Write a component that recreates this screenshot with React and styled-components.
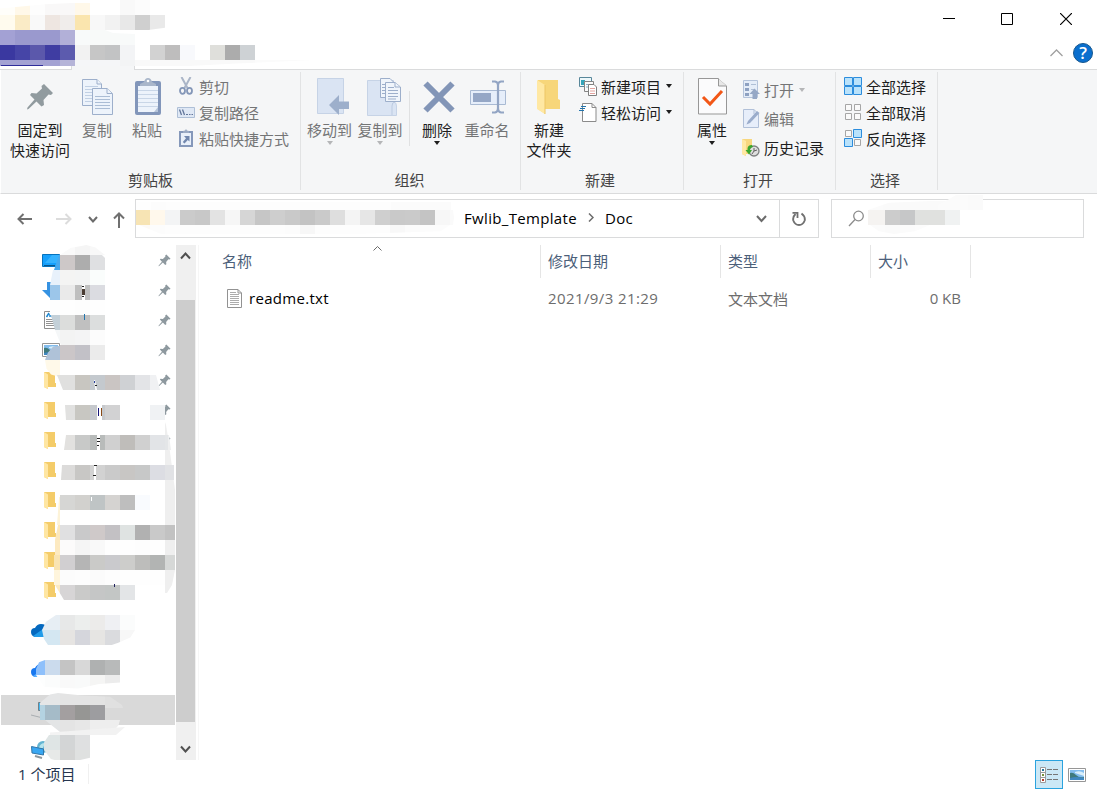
import React from 'react';
import styled, { createGlobalStyle } from 'styled-components';

const lineColor = '#dadbdc';
const ribbonColor = '#f5f6f7';
const disabledColor = '#747576';

const GlobalStyle = createGlobalStyle`
    * {
        box-sizing: border-box;
    }
    body {
        margin: 0;
        background: white;
        font-family: "Open Sans", "Noto Sans CJK SC", sans-serif;
        font-size: 15px;
        color: #1e1e1e;
    }
    svg {
        display: block;
        flex: none;
    }
`;

// Icons
const pinPath = 'M18 1 27 10 25 12 22.500 11.500 17.500 17 18 22 15.500 23.500 10.500 18.500 2.500 26 1 26.500 1.500 24.500 8.500 16.500 4 12 5.500 10 10.500 10.500 16 5.500 15.500 3Z';

const Pin = ({ size, color }) => (
    <svg width={size} height={size} viewBox="0 0 28 28">
        <path d={pinPath} fill={color} />
    </svg>
);

const CopyIcon = () => (
    <svg width="31" height="36" viewBox="0 0 31 36">
        <g fill="#edf3fb" stroke="#9dafcb">
            <path d="M.5.500H15L19.500 5V26.500H.500Z" />
            <path d="M15 .5V5H19.500" />
            <path d="M3 7.500H16M3 10.500H16M3 13.500H16M3 16.500H10M3 19.500H10M3 22.500H10" stroke="#c1d0e4" />
            <path d="M10.500 9.500H25L30.500 14.500V35.500H10.500Z" />
            <path d="M25 9.500V14.500H30" />
            <path d="M13 17.500H28M13 20.500H28M13 23.500H28M13 26.500H28M13 29.500H28" stroke="#abbdd5" />
        </g>
    </svg>
);

const PasteIcon = () => (
    <svg width="26" height="37" viewBox="0 0 26 37">
        <rect y="3" width="26" height="34" rx="2" fill="#8296ba" />
        <path d="M3 8H23V34H3Z" fill="#edf3fb" />
        <path d="M3 12.500H23M3 16.500H23M3 20.500H23M3 24.500H23M3 28.500H23" stroke="#c9d6e7" />
        <path d="M19 34 23 29V34Z" fill="#b5c4da" />
        <path d="M5 8V6L9 4Q10 0 13 0T17 4L21 6V8Z" fill="#a9b6ca" />
        <circle cx="13" cy="3" r="1.300" fill="white" />
    </svg>
);

const CutIcon = () => (
    <svg width="14" height="18" viewBox="0 0 14 18">
        <path d="M2.500 0 8.500 11M11.500 0 5.500 11" stroke="#aab5c7" strokeWidth="2" />
        <ellipse cx="3.500" cy="13.800" rx="2.500" ry="3" fill="none" stroke="#8497b8" strokeWidth="1.800" />
        <ellipse cx="10.500" cy="13.800" rx="2.500" ry="3" fill="none" stroke="#8497b8" strokeWidth="1.800" />
    </svg>
);

const PathIcon = () => (
    <svg width="18" height="11" viewBox="0 0 18 11">
        <path d="M.5.500H17.500V10.500H.500Z" fill="#dfe8f5" stroke="#aebfd6" />
        <path d="M2.500 2.500 4.500 8M5.500 2.500 7.500 8" stroke="#63779b" strokeWidth="1.300" />
        <path d="M9 7.500H11M12 7.500H13.500M14.500 7.500H16" stroke="#63779b" />
    </svg>
);

const ShortcutIcon = () => (
    <svg width="14" height="18" viewBox="0 0 14 18">
        <path d="M1 3H13V17H1Z" fill="#e9f0fa" stroke="#8598ba" strokeWidth="2" />
        <path d="M4 4V2L6 1.500 7 0 8 1.500 10 2V4Z" fill="#9baac4" />
        <path d="M5 7H10.500V12.500L8.800 11 5.500 14.500 3.800 13 7 9.300Z" fill="#7187ae" />
    </svg>
);

const MoveIcon = () => (
    <svg width="33" height="37" viewBox="0 0 33 37">
        <path d="M.5.500H26.500V35.500H.500Z" fill="#dae4f3" stroke="#c6d3e6" />
        <path d="M12 27 22 17V23.500H32V31H22V37Z" fill="#9dafcb" />
    </svg>
);

const CopyToIcon = () => (
    <svg width="34" height="38" viewBox="0 0 34 38">
        <path d="M.5 2.500H26.500V24Q29.500 24 29.500 28V37.500H.500Z" fill="#dae4f3" stroke="#c6d3e6" />
        <path d="M25 37V28Q25 24 28 24" fill="none" stroke="#bccbe1" />
        <g fill="#f0f5fb" stroke="#9dafcb">
            <path d="M13.500.500H23L27.500 5V19.500H13.500Z" />
            <path d="M15 6.500H19M15 9.500H19M15 12.500H19M15 15.500H19" />
            <path d="M18.500 4.500H28L33.500 9V23.500H18.500Z" />
            <path d="M28 4.500V9H33M21 9.500H27M21 12.500H31M21 15.500H31M21 18.500H31M21 21H29" />
        </g>
    </svg>
);

const DeleteIcon = () => (
    <svg width="32" height="32" viewBox="0 0 32 32">
        <path d="M2.500 2.500 29.500 29.500M29.500 2.500 2.500 29.500" stroke="#8295b7" strokeWidth="6" />
    </svg>
);

const RenameIcon = () => (
    <svg width="37" height="34" viewBox="0 0 37 34">
        <path d="M.500 10.500H35.500V24.500H.500Z" fill="#e6eefa" stroke="#a9bad3" />
        <path d="M3 13H21V22H3Z" fill="#95a7c6" />
        <path d="M28 4V30M22 1.500H25Q28 2 28 5Q28 2 31 1.500H34M22 32.500H25Q28 32 28 28Q28 32 31 32.500H34" fill="none" stroke="#93a5c4" strokeWidth="2.200" />
    </svg>
);

const NewFolderIcon = () => (
    <svg width="24" height="36" viewBox="0 0 24 36">
        <path d="M1 1H21V20L23 21V30H8V35L1 30Z" fill="#f7d67a" />
        <path d="M0 1 8 6V35L0 30Z" fill="#ffe8a3" />
        <path d="M8 6V35" stroke="#edc665" />
    </svg>
);

const NewItemIcon = () => (
    <svg width="19" height="19" viewBox="0 0 19 19">
        <path d="M.5.500H12.500V9.500H.500Z" fill="#edf8fb" stroke="#58879a" />
        <path d="M2 3H6V8H2Z" fill="#34a5ba" />
        <path d="M5.500 4.500H14.500V14.500H5.500Z" fill="#fafafa" stroke="#858585" />
        <path d="M7 7.500H12M7 10H12" stroke="#86b2cb" />
        <path d="M9.500 7.500H15L17.500 10V18.500H9.500Z" fill="#fff" stroke="#808080" />
        <path d="M11 11.500H16M11 14H16M11 16.500H16" stroke="#e3a4a0" />
    </svg>
);

const EasyAccessIcon = () => (
    <svg width="18" height="19" viewBox="0 0 18 19">
        <path d="M3.500.500H13L17 4.500V18.500H3.500Z" fill="#fff" stroke="#8b8b8b" />
        <path d="M13 .5V4.500H17" fill="none" stroke="#8b8b8b" />
        <path d="M2 3.500H7M1 5.500H6M0 7.500H5" stroke="#2375ad" />
    </svg>
);

const PropertiesIcon = () => (
    <svg width="29" height="37" viewBox="0 0 29 37">
        <path d="M.5.500H20L28.500 8V36H.500Z" fill="#fbfbfc" stroke="#979797" />
        <path d="M20.500.500V8H28.500" fill="#e7e7e7" stroke="#979797" />
        <path d="M5 19 12 26 24 13" fill="none" stroke="#f25717" strokeWidth="3" />
    </svg>
);

const OpenIcon = () => (
    <svg width="17" height="19" viewBox="0 0 17 19">
        <path d="M.5.500H14.500V17.500H.500Z" fill="#e5edf8" stroke="#b4c3da" />
        <path d="M2 3H6V6H2ZM2 8H6V11H2ZM2 13H6V16H2Z" fill="#8ea1c1" />
        <path d="M8 4.500H13M8 9.500H12" stroke="#afbfd5" />
        <path d="M6.500 14 11.500 8.500 17 14H14V19H9.500V14Z" fill="#96a8c6" />
    </svg>
);

const EditIcon = () => (
    <svg width="17" height="19" viewBox="0 0 17 19">
        <path d="M.5.500H11L15.500 5V18.500H.500Z" fill="#e7eefa" stroke="#b1c0d8" />
        <path d="M3.500 15.500 5 12 14 2 16.500 4 7 14Z" fill="#9aaccb" />
        <path d="M11 .5V5" stroke="#b1c0d8" />
    </svg>
);

const HistoryIcon = () => (
    <svg width="18" height="19" viewBox="0 0 18 19">
        <path d="M0 1H10V10H13V16H4V18L0 16Z" fill="#f7d77f" />
        <path d="M0 1 4 3V18L0 16Z" fill="#ffe8a4" />
        <circle cx="12" cy="13" r="5" fill="#dedede" stroke="#7d8080" strokeWidth="1.300" />
        <path d="M12 10V13L15 12M10 16 12 13" fill="none" stroke="#626262" />
        <path d="M10 7Q5 7 5.500 12H3.500L7 16.500 10 12H8Q8 9.500 11 9Z" fill="#3aa62e" />
    </svg>
);

const Tile = ({ x, y, on }) => (
    on
        ? <path d={`M${x + 0.5} ${y + 0.5}h8v8h-8Z`} fill="#b9e2fb" stroke="#2c8ddd" />
        : <path d={`M${x + 1.5} ${y + 1.5}h6v6h-6Z`} fill="#fafafa" stroke="#a6a6a6" />
);

const SelectIcon = ({ tiles }) => (
    <svg width="18" height="18" viewBox="0 0 18 18">
        {tiles.map((on, i) => (
            <Tile key={i} x={(i % 2) * 9} y={i > 1 ? 9 : 0} on={on} />
        ))}
    </svg>
);

const FolderIcon = () => (
    <svg width="12" height="17" viewBox="0 0 12 17">
        <path d="M0 0H11V11H12V15H4V17L0 15Z" fill="#f4cc69" />
        <path d="M0 0 4 2.500V17L0 15Z" fill="#ffe6a2" />
    </svg>
);

const DesktopIcon = () => (
    <svg width="18" height="13" viewBox="0 0 18 13">
        <path d="M.5.500H17.500V12.500H.500Z" fill="#16a0fc" stroke="#0673bd" />
        <path d="M10 1H17V9H3Z" fill="#36b3ff" />
        <path d="M2 11.500H13" stroke="#07568d" />
    </svg>
);

const DownloadIcon = () => (
    <svg width="16" height="17" viewBox="0 0 16 17">
        <path d="M5 0H11V8H16L8 16 0 8H5Z" fill="#3592e2" />
    </svg>
);

const DocumentIcon = () => (
    <svg width="16" height="18" viewBox="0 0 16 18">
        <path d="M.5.500H15.500V17.500H.500Z" fill="#fff" stroke="#8e8e8e" />
        <path d="M2.500 6 5 2M6 6V3M7.500 3H11M7.500 5.500H12" stroke="#1b86d1" strokeWidth="1.500" />
        <path d="M2 8.500H12M2 10.500H12M2 12.500H12M2 14.500H12" stroke="#929292" />
    </svg>
);

const PictureIcon = () => (
    <svg width="18" height="14" viewBox="0 0 18 14">
        <path d="M.5.500H17.500V13.500H.500Z" fill="#fff" stroke="#969696" />
        <path d="M2 2H16V12H2Z" fill="#82bced" />
        <path d="M7 4Q12 2 16 5V8Q10 6 7 5Z" fill="#d8eefa" />
        <path d="M2 5Q5 4 8 7T16 9V12H2Z" fill="#3f7a7c" />
        <path d="M2 10Q9 8 16 10V12H2Z" fill="#3f87c0" />
    </svg>
);

const CloudIcon = ({ fill, light }) => (
    <svg width="21" height="13" viewBox="0 0 21 13">
        <path d="M0 8Q0 4 4 4Q6 0 10 0Q15 0 17 4Q21 5 21 9T16 13H4Q0 12 0 8Z" fill={fill} />
        <path d="M2 12 12 5 21 10Q20 13 16 13H4Z" fill={light} />
    </svg>
);

const PcIcon = () => (
    <svg width="21" height="17" viewBox="0 0 21 17">
        <path d="M7.500.500H20.500V8.500H7.500Z" fill="#47b9ef" stroke="#748087" />
        <path d="M0 13 12 16" stroke="#a8adb1" />
    </svg>
);

const NetworkIcon = () => (
    <svg width="18" height="18" viewBox="0 0 18 18">
        <circle cx="12" cy="6" r="6" fill="#64b4d1" />
        <path d="M8 7Q9 2 14 2L12 7Z" fill="#b6e4ec" />
        <path d="M.5 5.500 12.500 8V14L1 12Z" fill="#39a7f2" stroke="#3376a8" />
        <path d="M4 15 11 17" stroke="#8d989e" strokeWidth="2" />
    </svg>
);

const TextFileIcon = () => (
    <svg width="15" height="19" viewBox="0 0 15 19">
        <path d="M.5.500H11L14.500 4V18.500H.500Z" fill="#fff" stroke="#929292" />
        <path d="M11 .5V4H14.500" fill="none" stroke="#929292" />
        <path d="M3 3.500H9M3 5.500H12M3 7.500H12M3 9.500H12M3 11.500H12M3 13.500H12M3 15.500H12" stroke="#acacac" />
    </svg>
);

const DetailsIcon = () => (
    <svg width="18" height="16" viewBox="0 0 18 16">
        <path d="M.5.500H5.500V15.500H.500ZM.500 5.500H5.500M.500 10.500H5.500" fill="#fff" stroke="#9b9b9b" />
        <path d="M2 2H4V4H2Z" fill="#23759b" />
        <path d="M2 7H4V9H2Z" fill="#76913a" />
        <path d="M2 12H4V14H2Z" fill="#b43a27" />
        <path d="M7 2.500H12M13 2.500H18M7 7.500H12M13 7.500H18M7 12.500H12M13 12.500H18" stroke="#757575" />
    </svg>
);

const Stroke = ({ w, h, d, color = '#6b6b6b', width = 2 }) => (
    <svg width={w} height={h} viewBox={`0 0 ${w} ${h}`}>
        <path d={d} fill="none" stroke={color} strokeWidth={width} />
    </svg>
);

const chevronDown = 'M1 1 5 5.500 9 1';

// Blurred out names
const Mosaic = ({ x, y, h = 15, first = 15, colors, clip }) => (
    <MosaicRow $x={x} $y={y} $h={h} $clip={clip}>
        {colors.split(' ').map((c, i) => (
            <Cell key={i} $w={i === 0 ? first : 15} $c={c === '-' ? 'transparent' : `#${c}`} />
        ))}
    </MosaicRow>
);

const sideMosaics = [
    { x: 52, y: 0, h: 10, first: 8, colors: 'fbfbfb fafafa f5f5f5 f8f8f8', clip: 'polygon(15% 100%, 35% 30%, 65% 0, 82% 25%, 100% 100%)' },
    { x: 54, y: 10, first: 6, colors: '48a9ee cdc8c8 adadad dfe0e2', clip: 'polygon(5px 0, 94% 0, 100% 20%, 100% 100%, 0 100%)' },
    { x: 50, y: 25, first: 10, colors: 'e8f1fb f4f4f3 f3f4f4 fafdfc', clip: 'polygon(3px 0, 100% 0, 100% 100%, 0 100%)' },
    { x: 50, y: 40, first: 10, colors: '9cc6ea eaeaea bfbfbf dbdce1' },
    { x: 50, y: 55, first: 10, colors: 'fdfefe fefefe fdfdfd fefefe' },
    { x: 51, y: 70, first: 9, colors: 'c3d0d8 dcdddc c0c0c0 dcdede', clip: 'polygon(0 0, 100% 0, 100% 100%, 4px 100%)' },
    { x: 55, y: 85, first: 5, colors: 'f5f7f8 f3f3f3 f4f4f5 fcfcfc', clip: 'polygon(0 0, 100% 0, 100% 100%, 6px 100%)' },
    { x: 45, y: 100, colors: 'afc2d8 cbc6c8 c2c1c7 ebebeb', clip: 'polygon(0 100%, 3px 50%, 8px 12%, 15px 5%, 15px 0, 100% 0, 100% 100%)' },
    { x: 45, y: 115, h: 17, colors: 'fff9e9', clip: 'polygon(0 0, 100% 0, 100% 100%, 40% 85%, 10% 50%)' },
    { x: 57, y: 130, first: 18, colors: 'e0e0df c8c6c1 c4c9ce cac5c3 cfd1d4 e3e4e7 f0f1f3', clip: 'polygon(0 0, 99px 0, 103px 100%, 6px 100%)' },
    { x: 65, y: 160, first: 10, colors: 'e1e1e0 c8c7c2 c6c9cd d2d2d3 - - f0f2f4', clip: 'polygon(0 0, 100% 0, 100% 100%, 1px 100%)' },
    { x: 64, y: 190, first: 11, colors: 'e2e1df c8c9c8 b8bbba d0d0d0 bfbdba d0d0d0 e2e4e7 eeeff0', clip: 'polygon(2px 0, 105px 0, 107px 100%, 0 100%)' },
    { x: 61, y: 220, first: 14, colors: 'dcdbda c8c7c5 d2d2d2 cacaca c8c6c4 c7c8c8 dcdde3 e1e2e5', clip: 'polygon(1px 0, 112px 0, 113px 100%, 0 100%)' },
    { x: 57, y: 252, first: 3, h: 28, colors: 'fdf3d8', clip: 'polygon(70% 0, 100% 0, 100% 100%, 0 100%)' },
    { x: 60, y: 250, colors: 'd6d6d4 d2d1ce bfc4c5 d5d3d1 bebebe f9fbfe' },
    { x: 55, y: 280, first: 5, colors: 'fbe8bd e0e0e1 c9c9ca cfc9c9 c3c1c4 dfe3e2 b1b1b1 c9c9c9', clip: 'polygon(3px 0, 100% 0, 100% 100%, 0 100%)' },
    { x: 55, y: 295, first: 5, colors: 'fdeac1 fcfbfb f5f5f5 f9f9f9 fefefe fefefe fdfdfd fefefe' },
    { x: 54, y: 310, first: 6, colors: 'f9e4b2 d1cfd1 b5b5b5 cacac8 cacacd cdcdcb bdbdbb b2b4b3' },
    { x: 54, y: 325, first: 6, colors: 'fff5dc fcfcfc fdfdfd fbfbfb fdfdfd fefefe fefefe fefefe' },
    { x: 55, y: 340, first: 5, colors: 'fbeac3 d7d5d6 cacac9 c5c6c6 c3c6c5 e3e5e7', clip: 'polygon(0 0, 100% 0, 100% 100%, 9px 100%)' },
    // right edge of the long names
    { x: 165, y: 177, h: 172, first: 10, colors: 'efefef', clip: 'polygon(0 0, 1px 3px, 3px 15px, 7px 45px, 10px 68px, 10px 148px, 7px 163px, 2px 171px, 0 171px)' },
    { x: 165, y: 190, first: 3, colors: 'e4e6e8' },
    { x: 165, y: 220, first: 9, colors: 'e1e2e5' },
    { x: 165, y: 280, first: 10, colors: 'c2c2c2' },
    { x: 165, y: 310, first: 10, colors: 'd6d8d7' },
    // bits of letters left uncovered
    { x: 82, y: 40, h: 15, first: 3, colors: 'ffffff' },
    { x: 82, y: 41, h: 1, first: 2, colors: '222222' },
    { x: 82, y: 44, h: 6, first: 3, colors: '4a3c32' },
    { x: 82, y: 51, h: 1, first: 2, colors: '222222' },
    { x: 84, y: 69, h: 6, first: 1, colors: '2375ad' },
    { x: 94, y: 135, h: 15, first: 4, colors: 'ffffff', clip: 'polygon(0 0, 1px 0, 100% 100%, 2px 100%)' },
    { x: 94, y: 136, h: 2, first: 1, colors: '28409a' },
    { x: 95, y: 140, h: 1, first: 2, colors: '222222' },
    { x: 97, y: 160, h: 15, first: 5, colors: 'ffffff' },
    { x: 98, y: 163, h: 8, first: 1, colors: '15157c' },
    { x: 101, y: 163, h: 8, first: 1, colors: '8a4a16' },
    { x: 97, y: 190, h: 15, first: 3, colors: 'ffffff' },
    { x: 97, y: 193, h: 1, first: 3, colors: '222222' },
    { x: 97, y: 196, h: 1, first: 3, colors: '222222' },
    { x: 97, y: 200, h: 1, first: 2, colors: '222222' },
    { x: 94, y: 220, h: 15, first: 2, colors: 'ffffff' },
    { x: 94, y: 220, h: 1, first: 3, colors: '222222' },
    { x: 93, y: 230, h: 1, first: 3, colors: '222222' },
    { x: 91, y: 252, h: 4, first: 1, colors: 'ffffff' },
    { x: 114, y: 339, h: 3, first: 1, colors: '20205c' },
    // onedrive and cloud drive
    { x: 42, y: 370, first: 18, colors: 'e7eef4 e7e8e8 eceeed ecebea eff0f3 fbfcfc', clip: 'polygon(0 100%, 4px 45%, 14px 0, 100% 0, 100% 100%)' },
    { x: 42, y: 385, first: 18, colors: 'd4e7f2 e6e4e2 d5d6dc e6e5e3 dadbde f7f7f7', clip: 'polygon(0 0, 100% 0, 95% 50%, 82% 85%, 75% 100%, 6px 100%, 2px 60%)' },
    { x: 36, y: 415, first: 9, colors: '8ec0fb cbdbed c4c4c4 d8d8d8 afb1b1 b8baba', clip: 'polygon(0 60%, 3px 15%, 9px 0, 100% 0, 100% 100%, 0 100%)' },
    { x: 36, y: 430, first: 9, colors: 'fdfefe fbfcfc f9f9f9 f9fafa f5f5f4 ececec', clip: 'polygon(0 0, 100% 0, 100% 50%, 75% 60%, 50% 90%, 10% 80%)' },
    // this pc
    { x: 40, y: 448, first: 20, colors: 'e5e6e7 e4e4e4 e4e4e4 e3e3e3 e0e0e0 e0e0e0', clip: 'polygon(0 65%, 10px 10%, 18px 0, 40px 15%, 70px 25%, 82px 80%, 83px 100%, 0 100%)' },
    { x: 40, y: 460, first: 5, colors: 'b4d3e2 a5bbc8 a39fa0 969694 9d9da0' },
    { x: 45, y: 475, colors: 'e3e5e6 e4e4e4 e7e7e7 eeeeee eeeeee', clip: 'polygon(0 0, 100% 0, 98% 35%, 92% 70%, 90% 100%, 20% 80%)' },
    { x: 50, y: 482, h: 8, colors: 'f3f3f3 f2f2f2 f2f2f2 f2f2f2 f2f2f2', clip: 'polygon(0 70%, 100% 0, 66px 100%, 0 100%)' },
    { x: 44, y: 490, first: 16, colors: 'dfe5e5 d3d5d6 dfe0e1', clip: 'polygon(0 50%, 5px 0, 100% 0, 100% 100%, 0 100%)' },
    { x: 44, y: 505, h: 13, first: 16, colors: 'e7e9e8 d4d5d4 dfe1e0', clip: 'polygon(0 0, 100% 0, 100% 60%, 50% 100%, 15% 70%)' },
];

const quickItems = [
    { icon: DesktopIcon, left: '42px', pinned: true },
    { icon: DownloadIcon, left: '42px', pinned: true },
    { icon: DocumentIcon, left: '44px', pinned: true },
    { icon: PictureIcon, left: '42px', pinned: true },
    { icon: FolderIcon, left: '44px', pinned: true },
    { icon: FolderIcon, left: '44px', pinned: true },
    { icon: FolderIcon, left: '44px', pinned: true },
    { icon: FolderIcon, left: '44px' },
    { icon: FolderIcon, left: '44px' },
    { icon: FolderIcon, left: '44px' },
    { icon: FolderIcon, left: '44px' },
    { icon: FolderIcon, left: '44px' },
];

class Ribbon extends React.Component {
    render() {
        return (
            <RibbonBar>
                <Group w="300px">
                    <Tools $left="4px">
                        <Big w="70px"><BigIcon><Pin size={28} color="#919b9f" /></BigIcon>固定到<br />快速访问</Big>
                        <Big w="44px" disabled><BigIcon><CopyIcon /></BigIcon>复制</Big>
                        <Big w="56px" disabled><BigIcon $shift="1px"><PasteIcon /></BigIcon>粘贴</Big>
                        <SmallList $left="2px">
                            <Small disabled><SmallIcon><CutIcon /></SmallIcon>剪切</Small>
                            <Small disabled><SmallIcon><PathIcon /></SmallIcon>复制路径</Small>
                            <Small disabled><SmallIcon><ShortcutIcon /></SmallIcon>粘贴快捷方式</Small>
                        </SmallList>
                    </Tools>
                    <GroupTitle $shift="0px">剪贴板</GroupTitle>
                </Group>
                <Group w="220px">
                    <Tools $left="3px">
                        <Big w="51px" disabled><BigIcon $shift="8px"><MoveIcon /></BigIcon>移动到<Arrow $c="#b5b6b8" /></Big>
                        <Big w="50px" disabled><BigIcon $shift="7px"><CopyToIcon /></BigIcon>复制到<Arrow $c="#b5b6b8" /></Big>
                        <ToolLine />
                        <Big w="54px"><BigIcon $shift="3px"><DeleteIcon /></BigIcon>删除<Arrow /></Big>
                        <Big w="46px" disabled><BigIcon $shift="3px"><RenameIcon /></BigIcon>重命名</Big>
                    </Tools>
                    <GroupTitle>组织</GroupTitle>
                </Group>
                <Group w="163px">
                    <Tools $left="1px">
                        <Big w="54px"><BigIcon><NewFolderIcon /></BigIcon>新建<br />文件夹</Big>
                        <SmallList $left="3px">
                            <Small><SmallIcon><NewItemIcon /></SmallIcon>新建项目<Arrow $inline /></Small>
                            <Small><SmallIcon $shift="-4px"><EasyAccessIcon /></SmallIcon>轻松访问<Arrow $inline /></Small>
                        </SmallList>
                    </Tools>
                    <GroupTitle $shift="-4px">新建</GroupTitle>
                </Group>
                <Group w="152px">
                    <Tools $left="4px">
                        <Big w="48px"><BigIcon $shift="1px"><PropertiesIcon /></BigIcon>属性<Arrow /></Big>
                        <SmallList $left="6px" $h="29px" $top="3px">
                            <Small disabled><SmallIcon><OpenIcon /></SmallIcon>打开<Arrow $inline $c="#b5b6b8" /></Small>
                            <Small disabled><SmallIcon><EditIcon /></SmallIcon>编辑</Small>
                            <Small><SmallIcon><HistoryIcon /></SmallIcon>历史记录</Small>
                        </SmallList>
                    </Tools>
                    <GroupTitle $shift="-3px">打开</GroupTitle>
                </Group>
                <Group w="102px">
                    <Tools>
                        <SmallList $left="8px">
                            <Small><SmallIcon><SelectIcon tiles={[1, 1, 1, 1]} /></SmallIcon>全部选择</Small>
                            <Small><SmallIcon><SelectIcon tiles={[0, 0, 0, 0]} /></SmallIcon>全部取消</Small>
                            <Small><SmallIcon><SelectIcon tiles={[0, 1, 1, 0]} /></SmallIcon>反向选择</Small>
                        </SmallList>
                    </Tools>
                    <GroupTitle $shift="-3px">选择</GroupTitle>
                </Group>
            </RibbonBar>
        );
    }
}

class App extends React.Component {
    render() {
        return (
            <Explorer>
                <GlobalStyle />
                <TitleBar>
                    <WindowButton><Stroke w={12} h={12} d="M0 5.500H12" color="#000" width={1} /></WindowButton>
                    <WindowButton><Stroke w={12} h={12} d="M.5.500H11.500V11.500H.500Z" color="#000" width={1} /></WindowButton>
                    <WindowButton><Stroke w={12} h={12} d="M0 0 12 12M12 0 0 12" color="#000" width={1.200} /></WindowButton>
                </TitleBar>
                <TabBar>
                    <ActiveTab />
                    <TabTools>
                        <Stroke w={13} h={8} d="M.5 7 6.500 1 12.500 7" color="#a0a0a0" width={1.300} />
                        <Help>?</Help>
                    </TabTools>
                </TabBar>
                <Mosaic x={0} y={3} h={12} colors="fffefa fff8e9 fdfdfd f9f8f8 f9f8f8 fff8e9" clip="polygon(0 45%, 50% 10%, 80% 0, 100% 0, 100% 100%, 0 100%)" />
                <Mosaic x={120} y={0} colors="f9f9f9 fcfcfc" />
                <Mosaic x={0} y={15} colors="fffbee faebc6 f9f9f9 eee6e1 f0edeb fae5ae f8f8f8 f2f2f2 e8e8e8 cfcfcf e9e9e9" clip="polygon(0 0, 100% 0, 100% 85%, 90% 100%, 0 100%)" />
                <Mosaic x={0} y={30} colors="a3a1d4 9a99ce 9a99ce 9a99ce b2b0d8 f8fafa f8faf9 f8faf9 f8fafa" clip="polygon(0 0, 105px 0, 113px 3px, 100% 4px, 100% 100%, 0 100%)" />
                <Mosaic x={0} y={45} colors="3a38a0 4645a7 5b58ab 3f3da2 5c5bae f2f2f2 c6c6c6 c2c3c4 f3f4f6 - d2d2d2 bebdbd f8f9fc - dfdfdb acacac ced2d5" />
                <Mosaic x={0} y={60} h={6} colors="a3a2d3 a3a2d3 a3a2d3 a3a2d3 b5b4d8 f5f6f8 f5f6f8 f5f6f8 f3f4f5 f9f9f9 f9f9f9 f9f9f9 f9f9f9 f9f9f9 f9f9f9 f9f9f9 f9f9f9 fbfbfb fbfbfb fbfbfb fcfcfc" clip="polygon(0 0, 100% 0, 75% 60%, 60% 100%, 0 100%)" />
                <Mosaic x={1} y={65} h={1} first={42} colors="2e2c9a" />
                <Ribbon />
                <Navigation>
                    <Arrows>
                        <Stroke w={16} h={12} d="M6.500 1 1.500 6 6.500 11M1 6H15" color="#707070" />
                        <Stroke w={16} h={12} d="M9.500 1 14.500 6 9.500 11M0 6H14" color="#dcdcdc" />
                        <Stroke w={10} h={7} d={chevronDown} />
                        <Stroke w={12} h={16} d="M1 6.500 6 1.500 11 6.500M6 2V16" color="#707070" />
                    </Arrows>
                    <Address>
                        <Crumbs>
                            Fwlib_Template
                            <Stroke w={6} h={9} d="M1 .5 5 4.500 1 8.500" width={1.500} />
                            Doc
                        </Crumbs>
                        <Stroke w={11} h={8} d="M1 1 5.500 6 10 1" />
                        <Refresh>
                            <svg width="14" height="16" viewBox="0 0 14 16">
                                <path d="M3.500 3Q.500 6 1.300 9.500Q3 14 7 14T12.700 9.500Q13.500 5.500 9.500 2.500" fill="none" stroke="#707070" strokeWidth="1.900" />
                                <path d="M.500 1.800H5.500V7" fill="none" stroke="#707070" strokeWidth="1.800" />
                            </svg>
                        </Refresh>
                        <Mosaic x={0} y={2} h={9} colors="fefefe fcfcfc fdfdfd fdfdfd fdfdfd fdfdfd fdfdfd fdfdfd fdfdfd fdfdfd fdfdfd fdfdfd fdfdfd fdfdfd fdfdfd fdfdfd fdfdfd fbfbfb fbfbfb fbfbfb fbfbfb" />
                        <Mosaic x={0} y={10} first={14} colors="f7e4b4 fff8ec f3f4f5 cbcbcb c8c8c8 e3e3e3 f6f6f6 d6d6d6 c6c6c6 cecece c9c9c9 c3c3c3 cacaca dedede f4f4f4 e6e6e6 cfcfcf c9c9c9 cacaca c4c4c4 f7f7f7 fafafa" clip="polygon(0 0, 317px 0, 318px 50%, 317px 100%, 0 100%)" />
                        <Mosaic x={0} y={25} h={9} first={14} colors="fdfaf6 fcfcfc fdfdfd fdfdfd fdfdfd fdfdfd fdfdfd fdfdfd fdfdfd fdfdfd fcfcfc f7f7f7 fdfdfd fdfdfd fdfdfd fdfdfd fdfdfd f8f8f8 fbfbfb fcfcfc fcfcfc" clip="polygon(1% 0, 100% 0, 97% 70%, 70% 100%, 8% 100%)" />
                    </Address>
                    <Search>
                        <svg width="17" height="17" viewBox="0 0 17 17">
                            <circle cx="10.500" cy="6" r="4.800" fill="none" stroke="#8c8c8c" strokeWidth="1.300" />
                            <path d="M7 9.500 1 16" stroke="#8c8c8c" strokeWidth="1.300" />
                        </svg>
                        <Mosaic x={36} y={1} h={9} colors="fbfbfb fafafa fafafa fafafa fafafa fafafa fafafa" clip="polygon(0 100%, 20% 20%, 60% 0, 100% 0, 100% 80%, 90% 100%)" />
                        <Mosaic x={36} y={10} first={17} colors="f5f3f1 cccccc c6c7c8 e0e1df e0e1df f0f2f2" />
                        <Mosaic x={38} y={25} h={9} colors="fbfbfb fafafa fbfbfb fcfcfc" clip="polygon(0 0, 100% 0, 75% 70%, 40% 100%, 15% 70%)" />
                    </Search>
                    <Mosaic x={938} y={1} h={15} colors="fbfbfb fbfbfb fafafa" clip="polygon(0 70%, 18px 0, 100% 0, 100% 100%, 0 100%)" />
                </Navigation>
                <Main>
                    <Side>
                        <SideGroup>
                            {quickItems.map(({ icon: Icon, left, pinned }, i) => (
                                <SideItem key={i} $left={left}>
                                    <Icon />
                                    {pinned && <PinSlot><Pin size={13} color="#8e999f" /></PinSlot>}
                                </SideItem>
                            ))}
                        </SideGroup>
                        <SideItem $left="31px"><CloudIcon fill="#0569bf" light="#219ce9" /></SideItem>
                        <SideItem $left="31px"><CloudIcon fill="#1978ef" light="#55adff" /></SideItem>
                        <SideItem $left="31px" active><PcIcon /></SideItem>
                        <SideItem $left="31px"><NetworkIcon /></SideItem>
                        {sideMosaics.map((m, i) => <Mosaic key={i} {...m} />)}
                    </Side>
                    <Scroll>
                        <Stroke w={11} h={8} d="M1 6.500 5.500 1.500 10 6.500" color="#505050" />
                        <Thumb />
                        <Stroke w={11} h={8} d="M1 1.500 5.500 6.500 10 1.500" color="#505050" />
                    </Scroll>
                    <Files>
                        <SortMark><Stroke w={9} h={5} d="M.5 4.500 4.500.500 8.500 4.500" width={1} /></SortMark>
                        <Columns>
                            <Column $left="23px">名称</Column>
                            <Column>修改日期</Column>
                            <Column>类型</Column>
                            <Column>大小</Column>
                        </Columns>
                        <FileRow>
                            <FileName><TextFileIcon />readme.txt</FileName>
                            <FileCell $latin>2021/9/3 21:29</FileCell>
                            <FileCell>文本文档</FileCell>
                            <FileCell $right>0 KB</FileCell>
                        </FileRow>
                    </Files>
                </Main>
                <Status>
                    <Count>1 个项目</Count>
                    <ViewButton active><DetailsIcon /></ViewButton>
                    <ViewButton><PictureIcon /></ViewButton>
                </Status>
            </Explorer>
        );
    }
}

export default App

const Explorer = styled.div`
    position: relative;
    display: flex;
    flex-direction: column;
    width: 1097px;
    height: 790px;
    overflow: hidden;
    background: white;
`;

const MosaicRow = styled.div`
    position: absolute;
    left: ${props => props.$x}px;
    top: ${props => props.$y}px;
    display: flex;
    height: ${props => props.$h}px;
    clip-path: ${props => props.$clip || 'none'};
`;

const Cell = styled.i`
    width: ${props => props.$w}px;
    background: ${props => props.$c};
`;

// Title bar
const TitleBar = styled.header`
    display: flex;
    justify-content: flex-end;
    height: 38px;
    padding-right: 2px;
`;

const WindowButton = styled.div`
    display: flex;
    align-items: center;
    justify-content: center;
    width: 58.5px;
`;

const TabBar = styled.div`
    display: flex;
    justify-content: space-between;
    height: 32px;
    border-bottom: 1px solid ${lineColor};
`;

const ActiveTab = styled.div`
    margin: 0 0 -1px 71px;
    width: 64px;
    background: linear-gradient(white 24px, ${ribbonColor} 24px);
    border: solid ${lineColor};
    border-width: 0 1px;
`;

const TabTools = styled.div`
    display: flex;
    align-items: center;
    gap: 10px;
    height: 30px;
    padding-right: 4px;
`;

const Help = styled.div`
    width: 20px;
    height: 20px;
    border: 1px solid #17578e;
    border-radius: 10px;
    background: #0a6fce;
    color: white;
    font-size: 17px;
    font-weight: 600;
    line-height: 18px;
    text-align: center;
`;

// Ribbon
const RibbonBar = styled.div`
    display: flex;
    height: 124px;
    padding-top: 2px;
    background: ${ribbonColor};
    border-bottom: 1px solid ${lineColor};
    border-left: 1px solid white;
`;

const Group = styled.section`
    display: flex;
    flex-direction: column;
    justify-content: space-between;
    width: ${props => props.w};
    height: 118px;
    border-right: 1px solid #e2e3e4;
`;

const Tools = styled.div`
    display: flex;
    padding-left: ${props => props.$left || 0};
`;

const Big = styled.div`
    width: ${props => props.w};
    color: ${props => props.disabled ? disabledColor : '#1e1e1e'};
    font-size: 15px;
    line-height: 20px;
    text-align: center;
    white-space: nowrap;
`;

const BigIcon = styled.div`
    display: flex;
    align-items: center;
    justify-content: center;
    height: 48px;
    padding: 1px 0 0 ${props => props.$shift || 0};
`;

const Arrow = styled.i`
    display: block;
    width: 0;
    margin: ${props => props.$inline ? '0 0 0 5px' : '1px auto 0'};
    border: 3px solid transparent;
    border-top: 4px solid ${props => props.$c || '#1e1e1e'};
    border-bottom: 0;
`;

const ToolLine = styled.div`
    width: 1px;
    height: 55px;
    margin: 19px 0 0 4px;
    background: #e0e1e2;
`;

const SmallList = styled.div`
    display: grid;
    grid-auto-rows: ${props => props.$h || '26px'};
    align-content: start;
    margin-left: ${props => props.$left || 0};
    padding-top: ${props => props.$top || '1px'};
`;

const Small = styled.div`
    display: flex;
    align-items: center;
    color: ${props => props.disabled ? disabledColor : '#1e1e1e'};
    white-space: nowrap;
`;

const SmallIcon = styled.div`
    display: flex;
    justify-content: center;
    width: 18px;
    margin-right: 4px;
    padding-right: ${props => props.$shift ? '0' : '0'};
`;

const GroupTitle = styled.h1`
    margin: 0 0 0 ${props => props.$shift || '-2px'};
    color: #444;
    font-size: 15px;
    font-weight: normal;
    line-height: 20px;
    text-align: center;
`;

// Address bar
const Navigation = styled.nav`
    position: relative;
    display: flex;
    height: 51px;
    padding-top: 5px;
`;

const Arrows = styled.div`
    display: flex;
    align-items: center;
    width: 135px;
    height: 40px;
    padding-left: 17px;

    svg:nth-child(2) {
        margin-left: 23px;
    }
    svg:nth-child(3) {
        margin-left: 16px;
    }
    svg:nth-child(4) {
        margin: 2px 0 0 15px;
    }
`;

const Address = styled.div`
    position: relative;
    display: flex;
    align-items: center;
    width: 684px;
    height: 39px;
    border: 1px solid ${lineColor};
`;

const Crumbs = styled.div`
    display: flex;
    flex: 1;
    align-items: center;
    gap: 11px;
    padding: 0 0 2px 328px;
    color: #000;
    letter-spacing: 0.33px;
`;

const Refresh = styled.div`
    display: flex;
    align-items: center;
    justify-content: center;
    width: 39px;
    height: 100%;
    margin-left: 12px;
    border-left: 1px solid ${lineColor};
`;

const Search = styled.div`
    position: relative;
    display: flex;
    align-items: center;
    width: 253px;
    height: 39px;
    margin-left: 12px;
    padding-left: 16px;
    border: 1px solid ${lineColor};
`;

// Content
const Main = styled.main`
    display: flex;
    height: 515px;
`;

const Side = styled.aside`
    position: relative;
    display: flex;
    flex-direction: column;
    gap: 10px;
    width: 176px;
    overflow: hidden;
`;

const SideGroup = styled.div`
    flex: none;
`;

const SideItem = styled.div`
    display: flex;
    flex: none;
    align-items: center;
    justify-content: space-between;
    height: 30px;
    margin: 0 1px;
    padding: 0 4px 0 calc(${props => props.$left} - 1px);
    background: ${props => props.active ? '#d9d9d9' : 'transparent'};
`;

const PinSlot = styled.div`
    padding-top: 1px;
`;

const Scroll = styled.div`
    display: flex;
    flex-direction: column;
    align-items: center;
    justify-content: space-between;
    width: 20px;
    padding: 7px 1px 7px 0;
    background: #f0f0f0;
`;

const Thumb = styled.div`
    width: 19px;
    height: 422px;
    margin-top: 17px;
    background: #cdcdcd;
`;

const Files = styled.div`
    position: relative;
    flex: 1;
    margin-left: 2px;
    border-left: 1px solid #f6f6f6;
`;

const SortMark = styled.div`
    position: absolute;
    left: 174px;
    top: 1px;
`;

const columnSizes = '342px 180px 150px 100px';

const Columns = styled.div`
    display: grid;
    grid-template-columns: ${columnSizes};
    height: 33px;
`;

const Column = styled.div`
    padding-left: ${props => props.$left || '7px'};
    border-right: 1px solid #e5e5e5;
    color: #4c607a;
    line-height: 33px;
`;

const FileRow = styled.div`
    display: grid;
    grid-template-columns: ${columnSizes};
    align-items: center;
    height: 30px;
    margin-top: 5px;
`;

const FileName = styled.div`
    display: flex;
    align-items: center;
    gap: 7px;
    padding-left: 28px;
    color: #000;
    letter-spacing: 0.3px;
`;

const FileCell = styled.div`
    padding: 0 10px 0 7px;
    color: #6d6d6d;
    letter-spacing: ${props => props.$latin ? '0.4px' : '0'};
    text-align: ${props => props.$right ? 'right' : 'left'};
`;

const Status = styled.footer`
    display: flex;
    height: 30px;
    padding-right: 6px;
`;

const Count = styled.div`
    width: 89px;
    height: 20px;
    margin: 4px auto 0 0;
    padding-left: 18px;
    border-right: 1px solid #f0f0f0;
    color: #26364f;
    line-height: 20px;
`;

const ViewButton = styled.div`
    display: flex;
    align-items: center;
    justify-content: center;
    width: 28px;
    height: 29px;
    border: 1px solid ${props => props.active ? '#2aa3df' : 'transparent'};
    background: ${props => props.active ? '#cbe8f6' : 'transparent'};
`;
